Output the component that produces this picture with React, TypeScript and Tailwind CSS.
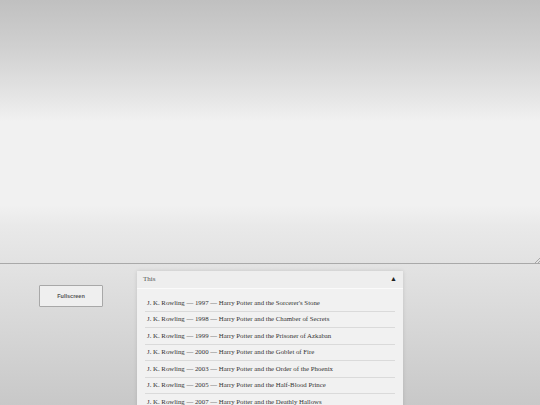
import React from "react";

const books = [
	{ year: "1997", title: "Harry Potter and the Sorcerer's Stone" },
	{ year: "1998", title: "Harry Potter and the Chamber of Secrets" },
	{ year: "1999", title: "Harry Potter and the Prisoner of Azkaban" },
	{ year: "2000", title: "Harry Potter and the Goblet of Fire" },
	{ year: "2003", title: "Harry Potter and the Order of the Phoenix" },
	{ year: "2005", title: "Harry Potter and the Half-Blood Prince" },
	{ year: "2007", title: "Harry Potter and the Deathly Hallows" },
];

const App = () => {
	return (
		<div className="w-[540px] h-[405px] overflow-hidden flex flex-col">
			{/* editor area */}
			<div className="relative h-[264px] shrink-0 border-b border-[#a9a9a9] bg-[linear-gradient(to_bottom,#c0c0c0_0%,#d0d0d0_18%,#e4e4e4_36%,#f1f1f1_46%,#f1f1f1_78%,#e9e9e9_86%,#e2e2e2_100%)]">
				<svg
					className="absolute right-0 bottom-0"
					width="6"
					height="6"
					viewBox="0 0 6 6"
				>
					<path d="M6 1 L1 6 M6 4 L4 6" stroke="#999" strokeWidth="0.8" />
				</svg>
			</div>

			<div className="flex-1 flex items-start pt-[7px] bg-gradient-to-b from-[#e3e3e3] to-[#c7c7c7]">
				<div className="w-[137px] shrink-0 flex pt-[14px] pl-[39px]">
					<button className="w-[64px] h-[22px] bg-[#efefef] border border-[#a8a8a8] rounded-[1px] text-[5.5px] font-bold text-[#555] font-['Liberation_Sans',sans-serif]">
						Fullscreen
					</button>
				</div>

				<div className="w-[266px] shrink-0 bg-[#f1f1f1] shadow-[0_0_4px_rgba(0,0,0,0.12)] font-['Liberation_Serif',serif]">
					<div className="h-[18px] flex items-center justify-between pl-[6px] pr-[6px] bg-[#eeeeee] border-b border-[#fafafa]">
						<span className="text-[7px] text-[#555]">This</span>
						<span className="text-[7px] text-[#222] leading-none">▲</span>
					</div>
					<ul className="px-[8px] pt-[6px]">
						{books.map((b) => (
							<li
								key={b.year}
								className="h-[16.5px] flex items-center pl-[2px] border-b border-[#dadada] text-[6.8px] text-[#333]"
							>
								J. K. Rowling — {b.year} — {b.title}
							</li>
						))}
					</ul>
				</div>
			</div>
		</div>
	);
};

export default App;
